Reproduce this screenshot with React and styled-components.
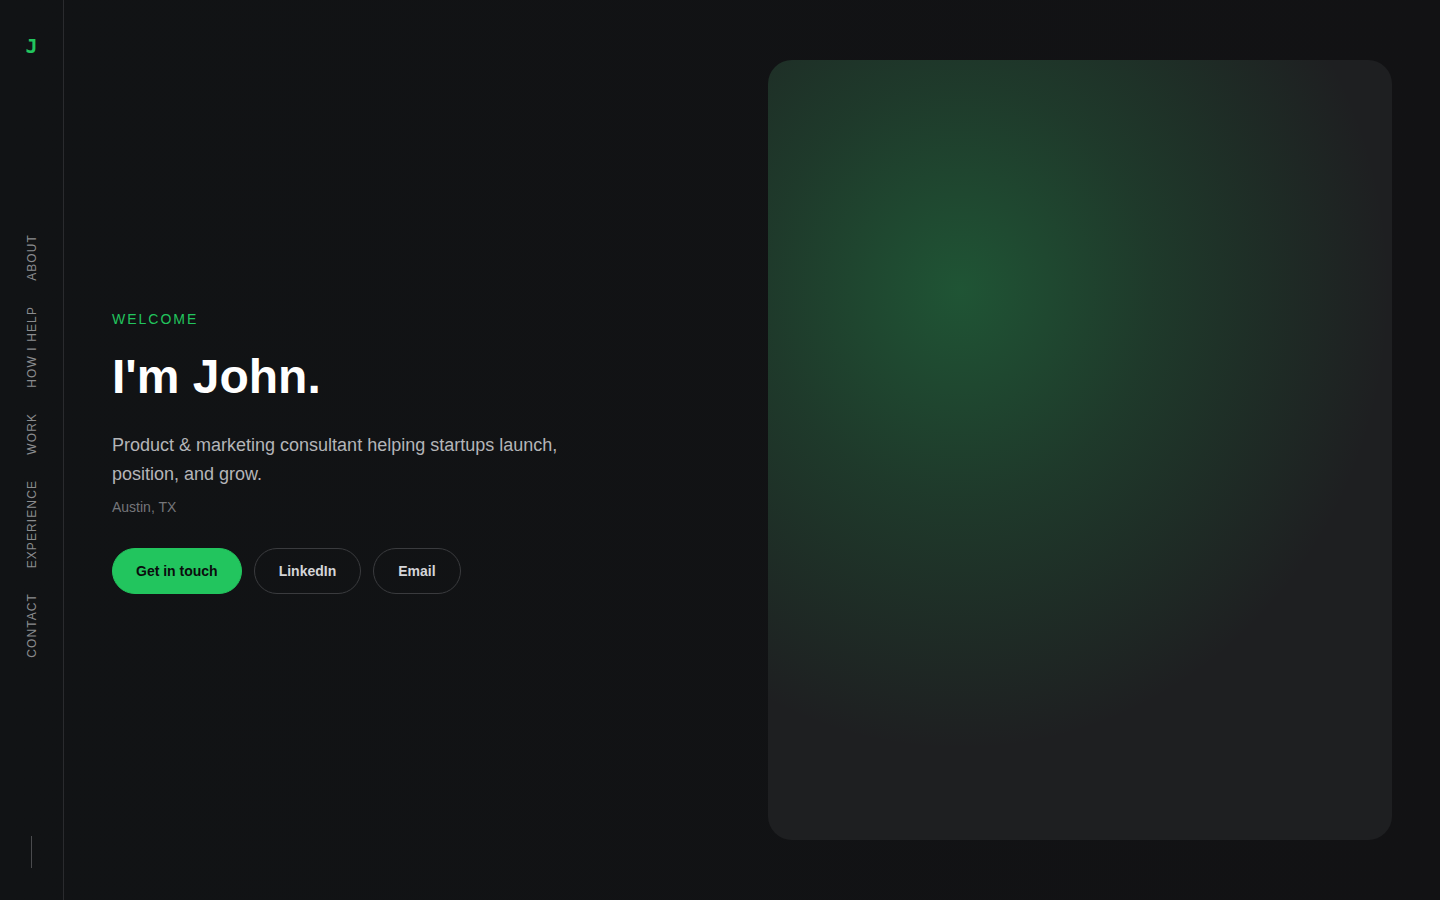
import React from "react";
import styled, { createGlobalStyle } from "styled-components";

const GlobalStyle = createGlobalStyle`
  * { box-sizing: border-box; }
  html, body { margin: 0; padding: 0; background: #111214; }
  body { font-family: "Liberation Sans", Arial, sans-serif; color: #fff; }
`;

const links = ["About", "How I help", "Work", "Experience", "Contact"];

const App = () => {
  return (
    <>
      <GlobalStyle />
      <Page>
        <Sidebar>
          <Logo>J</Logo>
          <Nav>
            {links.map((item) => (
              <NavLink key={item} href={`#${item.toLowerCase().replace(/ /g, "-")}`}>
                {item}
              </NavLink>
            ))}
          </Nav>
          <Rule />
        </Sidebar>
        <Main>
          <Intro>
            <Eyebrow>Welcome</Eyebrow>
            <Title>I'm John.</Title>
            <Lead>
              Product &amp; marketing consultant helping startups launch,
              position, and grow.
            </Lead>
            <Location>Austin, TX</Location>
            <Actions>
              <Button $primary>Get in touch</Button>
              <Button>LinkedIn</Button>
              <Button>Email</Button>
            </Actions>
          </Intro>
          <Visual />
        </Main>
      </Page>
    </>
  );
};

export default App;

const Page = styled.div`
  display: flex;
  height: 900px;
  background: linear-gradient(90deg, #111315 0%, #121214 100%);
`;

const Sidebar = styled.aside`
  width: 64px;
  flex-shrink: 0;
  border-right: 1px solid #2a2b2e;
  display: flex;
  flex-direction: column;
  align-items: center;
  justify-content: space-between;
  padding: 36px 0 32px;
`;

const Logo = styled.div`
  font-family: "DejaVu Sans Mono", "Liberation Mono", monospace;
  font-weight: bold;
  font-size: 20px;
  line-height: 20px;
  color: #22c55e;
`;

const Nav = styled.nav`
  display: flex;
  flex-direction: column;
  align-items: center;
  gap: 25px;
`;

const NavLink = styled.a`
  writing-mode: vertical-rl;
  transform: rotate(180deg);
  text-transform: uppercase;
  font-size: 12px;
  letter-spacing: 1.1px;
  color: #8b8c8f;
  text-decoration: none;
`;

const Rule = styled.div`
  width: 1px;
  height: 32px;
  background: #4a4b4e;
`;

const Main = styled.main`
  flex: 1;
  display: grid;
  grid-template-columns: 1fr 1fr;
  gap: 32px;
  padding: 60px 48px;
`;

const Intro = styled.section`
  display: flex;
  flex-direction: column;
  justify-content: center;
  align-items: flex-start;
  padding-top: 10px;
`;

const Eyebrow = styled.div`
  font-size: 14px;
  letter-spacing: 2px;
  text-transform: uppercase;
  color: #22c55e;
  margin-top: -6px;
`;

const Title = styled.h1`
  margin: 22px 0 0;
  font-size: 48px;
  line-height: 56px;
  font-weight: bold;
  color: #ffffff;
`;

const Lead = styled.p`
  margin: 26px 0 0;
  max-width: 480px;
  font-size: 18px;
  line-height: 29px;
  color: #b4b5b8;
`;

const Location = styled.div`
  margin-top: 10px;
  font-size: 14px;
  color: #75767a;
`;

const Actions = styled.div`
  display: flex;
  gap: 12px;
  margin-top: 33px;
`;

const Button = styled.button`
  height: 46px;
  padding: 0 ${(p) => (p.$primary ? "23px" : "24px")};
  border-radius: 999px;
  font-family: "Liberation Sans", Arial, sans-serif;
  font-weight: bold;
  font-size: 14px;
  cursor: pointer;
  border: 1px solid ${(p) => (p.$primary ? "#22c55e" : "#3a3b3e")};
  background: ${(p) => (p.$primary ? "#22c55e" : "transparent")};
  color: ${(p) => (p.$primary ? "#0b0c0d" : "#d4d5d8")};
`;

const Visual = styled.div`
  border-radius: 24px;
  background-color: #1e1f21;
  background-image: radial-gradient(
    ellipse 430px 460px at 192px 230px,
    rgba(34, 197, 94, 0.32) 0%,
    rgba(34, 197, 94, 0.16) 45%,
    rgba(34, 197, 94, 0) 100%
  );
`;
